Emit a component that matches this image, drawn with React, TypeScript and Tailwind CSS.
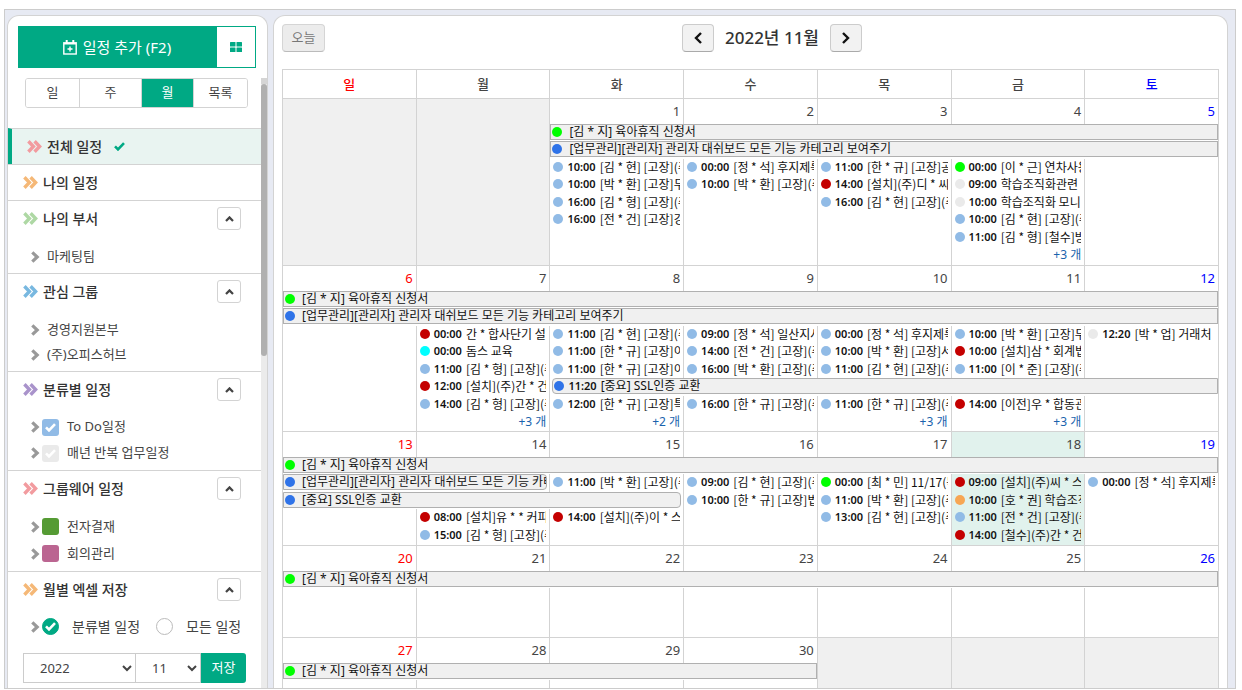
import React, { useState } from 'react';

type CalEvent = {
  color: string;
  title: string;
  time?: string;
};

// A bar runs over `span` days, a plain entry stays in its own day
type Slot =
  | { kind: 'empty' }
  | { kind: 'event'; event: CalEvent }
  | { kind: 'more'; count: number }
  | { kind: 'bar'; span: number; event: CalEvent; rounded?: 'left' | 'right' };

type Week = {
  days: (number | null)[];
  rows: Slot[][];
  filler?: string;
};

const SKY = 'bg-[#91bbe6]';
const RED = 'bg-[#c40000]';
const LIME = 'bg-[#00ff00]';
const BLUE = 'bg-[#2f73e8]';
const GRAY = 'bg-[#eaeaea]';
const CYAN = 'bg-[#00ffff]';
const ORANGE = 'bg-[#f7a654]';

const TODAY = 18;

const none: Slot = { kind: 'empty' };
const ev = (color: string, time: string, title: string): Slot => ({ kind: 'event', event: { color, time, title } });
const more = (count: number): Slot => ({ kind: 'more', count });
const bar = (span: number, color: string, title: string, rounded?: 'left' | 'right', time?: string): Slot => ({
  kind: 'bar',
  span,
  event: { color, title, time },
  rounded,
});

const LEAVE = '[김 * 지] 육아휴직 신청서';
const DASHBOARD = '[업무관리][관리자] 관리자 대쉬보드 모든 기능 카테고리 보여주기';

const weeks: Week[] = [
  {
    days: [null, null, 1, 2, 3, 4, 5],
    filler: 'h-px',
    rows: [
      [none, none, bar(5, LIME, LEAVE)],
      [none, none, bar(5, BLUE, DASHBOARD)],
      [none, none, ev(SKY, '10:00', '[김 * 현] [고장](주)'), ev(SKY, '00:00', '[정 * 석] 후지제록스'), ev(SKY, '11:00', '[한 * 규] [고장]공장'), ev(LIME, '00:00', '[이 * 근] 연차사용'), none],
      [none, none, ev(SKY, '10:00', '[박 * 환] [고장]두산'), ev(SKY, '10:00', '[박 * 환] [고장](주)'), ev(RED, '14:00', '[설치](주)디 * 씨'), ev(GRAY, '09:00', '학습조직화관련'), none],
      [none, none, ev(SKY, '16:00', '[김 * 형] [고장](주)'), none, ev(SKY, '16:00', '[김 * 현] [고장](주)'), ev(GRAY, '10:00', '학습조직화 모니터'), none],
      [none, none, ev(SKY, '16:00', '[전 * 건] [고장]강남'), none, none, ev(SKY, '10:00', '[김 * 현] [고장](주)'), none],
      [none, none, none, none, none, ev(SKY, '11:00', '[김 * 형] [철수]방문'), none],
      [none, none, none, none, none, more(3), none],
    ],
  },
  {
    days: [6, 7, 8, 9, 10, 11, 12],
    rows: [
      [bar(7, LIME, LEAVE)],
      [bar(7, BLUE, DASHBOARD)],
      [none, ev(RED, '00:00', '간 *  합사단기 설치'), ev(SKY, '11:00', '[김 * 현] [고장](주)'), ev(SKY, '09:00', '[정 * 석] 일산지사'), ev(SKY, '00:00', '[정 * 석] 후지제록스'), ev(SKY, '10:00', '[박 * 환] [고장]두산'), ev(GRAY, '12:20', '[박 * 업] 거래처')],
      [none, ev(CYAN, '00:00', '돔스 교육'), ev(SKY, '11:00', '[한 * 규] [고장]이천'), ev(SKY, '14:00', '[전 * 건] [고장](주)'), ev(SKY, '10:00', '[박 * 환] [고장]서울'), ev(RED, '10:00', '[설치]삼 * 회계법인'), none],
      [none, ev(SKY, '11:00', '[김 * 형] [고장](주)'), ev(SKY, '11:00', '[한 * 규] [고장]이천'), ev(SKY, '16:00', '[박 * 환] [고장](주)'), ev(SKY, '11:00', '[김 * 현] [고장](주)'), ev(SKY, '11:00', '[이 * 준] [고장](주)'), none],
      [none, ev(RED, '12:00', '[설치](주)간 * 건'), bar(5, BLUE, '[중요] SSL인증 교환', 'left', '11:20')],
      [none, ev(SKY, '14:00', '[김 * 형] [고장](주)'), ev(SKY, '12:00', '[한 * 규] [고장]특허'), ev(SKY, '16:00', '[한 * 규] [고장](주)'), ev(SKY, '11:00', '[한 * 규] [고장](주)'), ev(RED, '14:00', '[이전]우 * 합동관세'), none],
      [none, more(3), more(2), none, more(3), more(3), none],
    ],
  },
  {
    days: [13, 14, 15, 16, 17, 18, 19],
    filler: 'h-px',
    rows: [
      [bar(7, LIME, LEAVE)],
      [bar(2, BLUE, DASHBOARD, 'right'), ev(SKY, '11:00', '[박 * 환] [고장](주)'), ev(SKY, '09:00', '[김 * 현] [고장](주)'), ev(LIME, '00:00', '[최 * 민] 11/17(목)'), ev(RED, '09:00', '[설치](주)씨 * 스'), ev(SKY, '00:00', '[정 * 석] 후지제록스')],
      [bar(3, BLUE, '[중요] SSL인증 교환', 'right'), ev(SKY, '10:00', '[한 * 규] [고장]법무'), ev(SKY, '11:00', '[박 * 환] [고장](주)'), ev(ORANGE, '10:00', '[호 * 권] 학습조직화'), none],
      [none, ev(RED, '08:00', '[설치]유 * * 커피'), ev(RED, '14:00', '[설치](주)이 * 스'), none, ev(SKY, '13:00', '[김 * 현] [고장](주)'), ev(SKY, '11:00', '[전 * 건] [고장](주)'), none],
      [none, ev(SKY, '15:00', '[김 * 형] [고장](주)'), none, none, none, ev(RED, '14:00', '[철수](주)간 * 건'), none],
    ],
  },
  {
    days: [20, 21, 22, 23, 24, 25, 26],
    filler: 'h-[49px]',
    rows: [[bar(7, LIME, LEAVE)]],
  },
  {
    days: [27, 28, 29, 30, null, null, null],
    filler: 'h-[49px]',
    rows: [[bar(4, LIME, LEAVE), none, none, none]],
  },
];

const weekdays = ['일', '월', '화', '수', '목', '금', '토'];

const dayColor = (col: number) => {
  if (col === 0) return 'text-[#f00]';
  if (col === 6) return 'text-[#00f]';
  return 'text-[#444]';
};

const cellBg = (day: number | null) => {
  if (day === null) return 'bg-[#f0f0f0]';
  if (day === TODAY) return 'bg-[#e1f2ed]';
  return '';
};

const Dot: React.FC<{ color: string }> = ({ color }) => (
  <span className={`h-[10px] w-[10px] shrink-0 rounded-full ${color}`} />
);

const SlotContent: React.FC<{ slot: Slot }> = ({ slot }) => {
  if (slot.kind === 'event') {
    return (
      <a href="#event" className="mr-[3px] ml-[3px] flex h-4 items-center gap-1 overflow-hidden leading-4 whitespace-nowrap">
        <Dot color={slot.event.color} />
        <b className="text-[11px] font-semibold">{slot.event.time}</b>
        <span className="min-w-0 overflow-hidden font-['Noto_Sans_CJK_KR',sans-serif]">{slot.event.title}</span>
      </a>
    );
  }
  if (slot.kind === 'more') {
    return (
      <a href="#more" className="mr-[3px] block text-right text-[#1a63ad]">
        +{slot.count} 개
      </a>
    );
  }
  if (slot.kind === 'bar') {
    const shape =
      slot.rounded === 'left' ? 'ml-[2px] rounded-l' : slot.rounded === 'right' ? 'mr-[2px] rounded-r' : '';
    return (
      <a
        href="#event"
        className={`flex h-4 items-center overflow-hidden border border-[#b0b0b0] bg-[#f0f0f0] pl-px leading-[14px] whitespace-nowrap ${slot.event.time ? 'gap-1' : 'gap-[7px]'} ${shape}`}
      >
        <Dot color={slot.event.color} />
        {slot.event.time && <b className="text-[11px] font-semibold">{slot.event.time}</b>}
        <span className="min-w-0 overflow-hidden">{slot.event.title}</span>
      </a>
    );
  }
  return null;
};

const WeekRows: React.FC<{ week: Week }> = ({ week }) => (
  <tbody>
    <tr>
      {week.days.map((day, col) => (
        <td
          key={col}
          className={`h-[26px] border-t border-l border-[#d3d3d3] pr-[3px] text-right text-[13px] ${dayColor(col)} ${cellBg(day)}`}
        >
          {day}
        </td>
      ))}
    </tr>
    {week.rows.map((row, index) => {
      let col = 0;
      return (
        <tr key={index}>
          {row.map((slot) => {
            const start = col;
            const span = slot.kind === 'bar' ? slot.span : 1;
            col += span;
            return (
              <td
                key={start}
                colSpan={span}
                className={`border-l border-[#d3d3d3] align-top ${index % 2 ? 'h-[18px]' : 'h-[17px]'} ${cellBg(week.days[start])}`}
              >
                <SlotContent slot={slot} />
              </td>
            );
          })}
        </tr>
      );
    })}
    {week.filler && (
      <tr>
        {week.days.map((day, col) => (
          <td key={col} className={`border-l border-[#d3d3d3] ${week.filler} ${cellBg(day)}`} />
        ))}
      </tr>
    )}
  </tbody>
);

const Calendar: React.FC = () => (
  <main className="min-w-0 flex-1 overflow-hidden rounded-t-xl border border-b-0 border-[#d3d3d3] bg-white px-2 pt-2">
    <div className="flex h-7 items-center justify-between">
      <button
        disabled
        className="h-7 w-[43px] rounded border border-[#d5d5d5] border-b-[#bbb] bg-[#ececec] text-[13px] text-[#777]"
      >
        오늘
      </button>
      <div className="flex items-center gap-[11px]">
        <button aria-label="이전" className="flex h-7 w-8 items-center justify-center rounded border border-[#ccc] border-b-[#aaa] bg-[#f2f2f2]">
          <svg width="8" height="12" viewBox="0 0 8 12" fill="none" stroke="#111" strokeWidth="2.4">
            <path d="M7 1 2 6l5 5" />
          </svg>
        </button>
        <h2 className="text-[17px] leading-7 font-medium text-[#333]">2022년 11월</h2>
        <button aria-label="다음" className="flex h-7 w-8 items-center justify-center rounded border border-[#ccc] border-b-[#aaa] bg-[#f2f2f2]">
          <svg width="8" height="12" viewBox="0 0 8 12" fill="none" stroke="#111" strokeWidth="2.4">
            <path d="m1 1 5 5-5 5" />
          </svg>
        </button>
      </div>
      <span />
    </div>

    <table className="mt-[17px] w-full table-fixed border-separate border-spacing-0 border-r border-[#d3d3d3] text-[12px] leading-[17px] text-[#111]">
      <thead>
        <tr>
          {weekdays.map((name, col) => (
            <th key={name} className={`h-[29px] border-t border-l border-[#d3d3d3] text-[13px] font-medium ${dayColor(col)}`}>
              {name}
            </th>
          ))}
        </tr>
      </thead>
      {weeks.map((week, index) => (
        <WeekRows key={index} week={week} />
      ))}
    </table>
  </main>
);

const DoubleArrow: React.FC<{ className: string }> = ({ className }) => (
  <svg width="15" height="13" viewBox="0 0 15 13" fill="none" stroke="currentColor" strokeWidth="3.4" className={`shrink-0 ${className}`}>
    <path d="m1.4 1.3 5 5.2-5 5.2M7.6 1.3l5 5.2-5 5.2" />
  </svg>
);

const ItemArrow: React.FC = () => (
  <svg width="9" height="12" viewBox="0 0 9 12" fill="none" stroke="#999" strokeWidth="3.2" className="shrink-0">
    <path d="m1.3 1.3 4.9 4.7-4.9 4.7" />
  </svg>
);

const CheckMark: React.FC<{ className?: string }> = ({ className = '' }) => (
  <svg width="11" height="9" viewBox="0 0 11 9" fill="none" stroke="currentColor" strokeWidth="2.6" className={className}>
    <path d="m1 4.4 3 3L10 1.2" />
  </svg>
);

type SectionProps = {
  title: string;
  color: string;
  children?: React.ReactNode;
};

const Section: React.FC<SectionProps> = ({ title, color, children }) => {
  const [open, setOpen] = useState(true);

  return (
    <section className={`border-t border-[#d3d3d3] ${children ? 'pb-1' : ''}`}>
      <div className={`flex h-[35px] items-center pr-5 pl-[15px] ${children ? 'mb-[7px]' : ''}`}>
        <DoubleArrow className={color} />
        <h3 className="ml-[5px] flex-1 text-[14px] font-medium text-[#333]">{title}</h3>
        {children && (
          <button
            aria-label={title}
            aria-expanded={open}
            onClick={() => setOpen(!open)}
            className="flex h-[23px] w-6 items-center justify-center rounded-[3px] border border-[#d3d3d3] bg-white"
          >
            <svg width="9" height="6" viewBox="0 0 9 6" fill="none" stroke="#444" strokeWidth="2.2">
              <path d="m1 5 3.5-3.6L8 5" />
            </svg>
          </button>
        )}
      </div>
      {open && children}
    </section>
  );
};

const LinkList: React.FC<{ labels: string[] }> = ({ labels }) => (
  <ul className="pt-px">
    {labels.map((label) => (
      <li key={label} className="flex h-[25px] items-center pl-[23px]">
        <ItemArrow />
        <a href="#item" className="ml-[7px]">
          {label}
        </a>
      </li>
    ))}
  </ul>
);

type CheckItemProps = {
  label: string;
  color: string;
  height: string;
  mark?: boolean;
};

const CheckItem: React.FC<CheckItemProps> = ({ label, color, height, mark }) => (
  <div className={`flex items-center pl-[23px] ${height}`}>
    <ItemArrow />
    <label className="ml-[2px] flex items-center">
      <span className="relative flex h-[17px] w-[17px] items-center justify-center">
        <input type="checkbox" defaultChecked className={`h-[17px] w-[17px] appearance-none rounded-[3px] ${color}`} />
        {mark && <CheckMark className="pointer-events-none absolute top-1 left-[3px] text-white" />}
      </span>
      <span className="ml-2">{label}</span>
    </label>
  </div>
);

const RadioItem: React.FC<{ label: string; checked?: boolean }> = ({ label, checked }) => (
  <label className="flex items-center">
    <span className="relative flex h-[17px] w-[17px]">
      <input
        type="radio"
        name="excel"
        defaultChecked={checked}
        className="peer h-[17px] w-[17px] appearance-none rounded-full border border-[#bbb] checked:border-[#00a984] checked:bg-[#00a984]"
      />
      <CheckMark className="pointer-events-none absolute top-1 left-[3px] text-white opacity-0 peer-checked:opacity-100" />
    </span>
    <span className="ml-[13px] text-[14px]">{label}</span>
  </label>
);

const Sidebar: React.FC = () => {
  const [view, setView] = useState('월');
  const views = [
    { name: '일', width: 'w-[54px]' },
    { name: '주', width: 'w-[62px]' },
    { name: '월', width: 'w-[52px]' },
    { name: '목록', width: 'w-[53px]' },
  ];

  return (
    <aside className="flex w-[261px] shrink-0 flex-col overflow-hidden rounded-t-xl border border-b-0 border-[#d3d3d3] bg-white text-[13px] text-[#444]">
      <div className="mt-[10px] mr-[11px] mb-[10px] ml-[10px] flex h-[42px] shrink-0">
        <button className="flex flex-1 items-center justify-center gap-[6px] bg-[#00a984] text-[15px] text-white">
          <svg width="14" height="15" viewBox="0 0 14 15" fill="none" stroke="currentColor" strokeWidth="1.4">
            <rect x=".8" y="2.8" width="12.4" height="11.2" />
            <path d="M1 3.8h12M7 6.5v5M4.5 9h5" />
            <path d="M3.7 0v3M10.3 0v3" strokeWidth="2" />
          </svg>
          일정 추가 (F2)
        </button>
        <button aria-label="위젯" className="flex w-10 items-center justify-center border border-[#00a984] bg-white">
          <svg width="12" height="10" viewBox="0 0 12 10" fill="#00a984">
            <rect width="5.5" height="4.5" rx=".5" />
            <rect x="6.5" width="5.5" height="4.5" rx=".5" />
            <rect y="5.5" width="5.5" height="4.5" rx=".5" />
            <rect x="6.5" y="5.5" width="5.5" height="4.5" rx=".5" />
          </svg>
        </button>
      </div>

      <div className="flex min-h-0 flex-1">
        <div className="min-w-0 flex-1 overflow-hidden">
          <div className="mr-3 mb-5 ml-[17px] flex h-[30px] w-fit divide-x divide-[#d3d3d3] overflow-hidden rounded-[3px] border border-[#d3d3d3]">
            {views.map((item) => (
              <button
                key={item.name}
                onClick={() => setView(item.name)}
                className={`${item.width} ${view === item.name ? 'bg-[#00a984] text-white' : 'bg-white'}`}
              >
                {item.name}
              </button>
            ))}
          </div>

          <div className="flex h-9 items-center border-t border-l-4 border-t-[#d3d3d3] border-l-[#00a984] bg-[#e9f4f1] pl-[15px]">
            <DoubleArrow className="text-[#f29b9f]" />
            <h3 className="ml-[5px] text-[14px] font-medium text-[#333]">전체 일정</h3>
            <CheckMark className="ml-3 text-[#00a984]" />
          </div>
          <Section title="나의 일정" color="text-[#f5b877]" />
          <Section title="나의 부서" color="text-[#aed8a4]">
            <LinkList labels={['마케팅팀']} />
          </Section>
          <Section title="관심 그룹" color="text-[#78b8e0]">
            <LinkList labels={['경영지원본부', '(주)오피스허브']} />
          </Section>
          <Section title="분류별 일정" color="text-[#a993cb]">
            <CheckItem label="To Do일정" color="bg-[#91bbe6]" height="h-[26px]" mark />
            <CheckItem label="매년 반복 업무일정" color="bg-[#eaeaea]" height="h-[26px]" mark />
          </Section>
          <Section title="그룹웨어 일정" color="text-[#f29b9f]">
            <CheckItem label="전자결재" color="bg-[#559b34]" height="h-[27px]" />
            <CheckItem label="회의관리" color="bg-[#bb6591]" height="h-[27px]" />
          </Section>
          <Section title="월별 엑셀 저장" color="text-[#f5b877]">
            <div className="flex h-[25px] items-center pl-[23px]">
              <ItemArrow />
              <div className="ml-[2px] flex gap-4 whitespace-nowrap">
                <RadioItem label="분류별 일정" checked />
                <RadioItem label="모든 일정" />
              </div>
            </div>
            <div className="mt-[14px] flex h-[30px] pl-[15px]">
              <select aria-label="년" defaultValue="2022" className="w-[113px] border border-[#ccc] bg-white pl-3">
                <option>2021</option>
                <option>2022</option>
                <option>2023</option>
              </select>
              <select aria-label="월" defaultValue="11" className="-ml-px w-[66px] border border-[#ccc] bg-white pl-3">
                <option>10</option>
                <option>11</option>
                <option>12</option>
              </select>
              <button className="w-[45px] rounded-r-[3px] bg-[#00a984] text-white">저장</button>
            </div>
          </Section>
        </div>
        <div aria-hidden="true" className="w-[6px] bg-[#ebebeb]">
          <div className="h-[6px] bg-[#d5d5d5]" />
          <div className="h-[272px] rounded-full bg-[#b0b0b0]" />
        </div>
      </div>
    </aside>
  );
};

const App: React.FC = () => {
  return (
    <div className="h-screen overflow-hidden bg-white pt-[9px] pr-[6px] pb-px pl-1 font-['Noto_Sans','Noto_Sans_CJK_KR',sans-serif]">
      <div className="flex h-full gap-[5px] border border-[#ccc] bg-[#e7eaf3] pt-[5px] pr-[7px] pl-[2px]">
        <Sidebar />
        <Calendar />
      </div>
    </div>
  );
};

export default App;
